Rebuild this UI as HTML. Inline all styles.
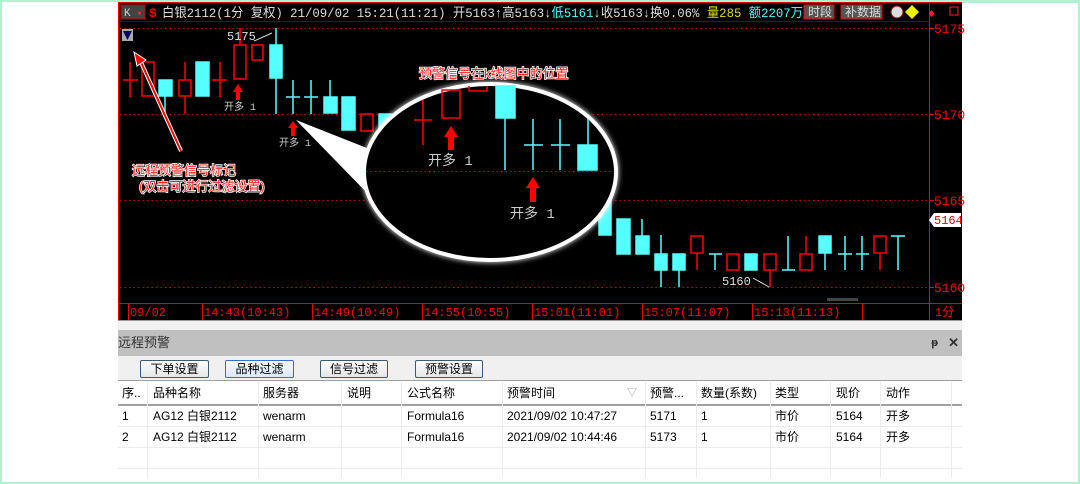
<!DOCTYPE html>
<html><head><meta charset="utf-8"><style>
*{margin:0;padding:0;box-sizing:border-box}
body{width:1080px;height:484px;background:#fff;position:relative;overflow:hidden;font-family:"Liberation Sans","Noto Sans CJK SC",sans-serif}
.frame{position:absolute;left:0;top:0;width:1080px;height:484px;border:2px solid #aef3d2;pointer-events:none}
.abs{position:absolute}
.panelhdr{left:118px;top:330px;width:844px;height:26px;background:#c0c0c0;font-size:13px;color:#333;line-height:26px}
.tool{left:118px;top:356px;width:844px;height:25px;background:#f0f0f0;border-bottom:1px solid #a0a0a0}
.btn{position:absolute;top:4px;height:18px;border:1px solid #3c5a78;border-radius:2px;background:linear-gradient(#fdfdfd,#e6e6e6);font-size:12px;text-align:center;line-height:16px;color:#000}
.tbl{left:118px;top:382px;width:844px;font-size:12px;color:#000}
.row{position:absolute;left:0;width:844px;height:21px;border-bottom:1px solid #ececec}
.row span{position:absolute;top:0;line-height:21px;white-space:nowrap}
.hdr{border-bottom:2px solid #a0a0a0;height:24px;background:#fff}
.hdr span{line-height:23px}
.vl{position:absolute;top:382px;width:1px;height:96px;background:#ececec}
</style></head><body>
<svg class="abs" style="left:0;top:0" width="1080" height="322" xmlns="http://www.w3.org/2000/svg" font-family="Liberation Mono, Noto Sans CJK SC, monospace">
<rect x="118" y="0" width="844" height="321" fill="#000"/>
<rect x="962" y="0" width="118" height="3" fill="#aef3d2"/>
<line x1="118.5" y1="0" x2="118.5" y2="320" stroke="#e00" />
<line x1="929.5" y1="0" x2="929.5" y2="320" stroke="#e00" />
<line x1="118" y1="2.5" x2="962" y2="2.5" stroke="#e00"/>
<line x1="118" y1="21.5" x2="929" y2="21.5" stroke="#600"/>
<g stroke="#b00" stroke-dasharray="1.5 3" stroke-width="1">
<line x1="120" y1="28.5" x2="929" y2="28.5"/><line x1="120" y1="114.5" x2="929" y2="114.5"/><line x1="120" y1="200.5" x2="929" y2="200.5"/><line x1="120" y1="287.5" x2="929" y2="287.5"/>
</g>
<g stroke="#e00"><line x1="929" y1="28.5" x2="934" y2="28.5"/><line x1="929" y1="114.5" x2="934" y2="114.5"/><line x1="929" y1="200.5" x2="934" y2="200.5"/><line x1="929" y1="287.5" x2="934" y2="287.5"/></g>
<g fill="#f00" font-size="13"><text x="934" y="33">5175</text><text x="934" y="119">5170</text><text x="934" y="205">5165</text><text x="934" y="292">5160</text></g>
<path d="M929 220 L934 213 H961 V227 H934 Z" fill="#fff"/><text x="934" y="224" fill="#e00" font-size="12">5164</text>
<rect x="121" y="5" width="24" height="14" fill="#444" stroke="#c00"/><text x="124" y="16" fill="#ccc" font-size="11">K</text><text x="137" y="16" fill="#f33" font-size="9">▾</text>
<text x="149" y="17" fill="#f00" font-size="13" font-weight="bold">$</text>
<text x="162" y="17" font-size="13" fill="#ddd" textLength="641" lengthAdjust="spacingAndGlyphs"><tspan>白银2112(1分 复权) 21/09/02 15:21(11:21) 开5163↑高5163↓</tspan><tspan fill="#4ff">低5161</tspan><tspan>↓收5163↓换0.06% </tspan><tspan fill="#dd0">量285</tspan><tspan fill="#4ff"> 额2207万</tspan></text>
<rect x="804" y="5" width="30" height="14" fill="#555" stroke="#e00"/><text x="808" y="16" fill="#ddd" font-size="12">时段</text>
<rect x="841" y="5" width="41" height="14" fill="#555" stroke="#e00"/><text x="845" y="16" fill="#ddd" font-size="12">补数据</text>
<circle cx="897" cy="12" r="6" fill="#ddd" stroke="#900"/><path d="M912 5 L919 12 L912 19 L905 12Z" fill="#ee0"/>
<text x="928" y="17" fill="#f22" font-size="12">♦</text><rect x="950" y="7" width="8" height="8" fill="none" stroke="#f22"/>
<rect x="122" y="29" width="11" height="12" fill="#aaa"/><path d="M123 31 L132 31 L127.5 40Z" fill="#006"/>
<g stroke="#f00" fill="none" stroke-width="1.5">
<path d="M123 80H138M130 62V97"/>
<rect x="142" y="62" width="12" height="34"/>
<rect x="179" y="80" width="12" height="16"/><path d="M185 62V80M185 96V113"/>
<path d="M212 80H227M220 62V97"/>
<rect x="234" y="45" width="12" height="34"/><path d="M240 28V45"/>
<rect x="252" y="45" width="11" height="15"/>
<rect x="361" y="114" width="12" height="17"/>
</g>
<path d="M254 41 L272 33" stroke="#ddd"/><text x="227" y="40" fill="#ddd" font-size="12">5175</text>
<g fill="#5ff" stroke="#5ff" stroke-width="1.5">
<rect x="159" y="80" width="13" height="16"/><path d="M165 96V113" fill="none"/>
<rect x="196" y="62" width="13" height="34"/>
<rect x="270" y="45" width="12" height="33"/><path d="M276 28V114" fill="none"/>
<path d="M286 97H300M293 80V114M304 97H318M311 80V114M330 80V97" fill="none"/>
<rect x="324" y="97" width="13" height="16"/>
<rect x="342" y="97" width="13" height="33"/>
<rect x="379" y="114" width="12" height="31"/>
</g>
<g fill="#f00"><path d="M238 84 L243 92 H240 V100 H236 V92 H233Z"/><path d="M293 121 L298 128 H295 V136 H291 V128 H288Z"/></g>
<g fill="#ccc" font-size="10"><text x="224" y="110">开多 1</text><text x="279" y="146">开多 1</text></g>
<g fill="#5ff" stroke="#5ff" stroke-width="1.5">
<rect x="599" y="200" width="12" height="35"/>
<rect x="617" y="219" width="13" height="35"/>
<rect x="636" y="236" width="13" height="18"/><path d="M642 219V236" fill="none"/>
<rect x="655" y="254" width="12" height="16"/><path d="M661 235V287" fill="none"/>
<rect x="673" y="254" width="12" height="16"/><path d="M679 270V287" fill="none"/>
<path d="M709 254H722M715 254V270" fill="none"/>
<rect x="745" y="254" width="12" height="16"/>
<path d="M782 270H795M788 236V270" fill="none"/>
<rect x="819" y="236" width="12" height="17"/><path d="M825 253V270" fill="none"/>
<path d="M838 254H852M845 236V270M856 254H869M862 236V270M891 236H905M898 236V270" fill="none"/>
</g>
<g stroke="#f00" fill="none" stroke-width="1.5">
<rect x="691" y="236" width="12" height="17"/><path d="M697 253V270"/>
<rect x="727" y="254" width="12" height="16"/>
<rect x="764" y="254" width="12" height="16"/><path d="M770 270V287"/>
<rect x="800" y="254" width="12" height="16"/><path d="M806 236V254"/>
<rect x="874" y="236" width="12" height="17"/><path d="M880 253V270"/>
</g>
<path d="M753 278 L769 287" stroke="#ddd"/><text x="722" y="285" fill="#ddd" font-size="12">5160</text>
<path d="M296 120 L372 150 L372 198 Z" fill="#fff"/>
<ellipse cx="490" cy="172" rx="126" ry="88" fill="#000" stroke="#fff" stroke-width="4" style="filter:drop-shadow(0 0 3px #fff)"/>
<line x1="366" y1="171.5" x2="614" y2="171.5" stroke="#b00" stroke-dasharray="1.5 3"/>
<g stroke="#f00" fill="none" stroke-width="1.5">
<path d="M414 120H432M423 100V145"/>
<rect x="442" y="90" width="18" height="28"/>
<path d="M469 86V91H487V86"/>
</g>
<g fill="#5ff" stroke="#5ff" stroke-width="1.5">
<rect x="496" y="86" width="19" height="32"/><path d="M505 118V170" fill="none"/>
<path d="M524 145H543M533 119V170M551 145H570M560 119V170M588 119V145" fill="none"/>
<rect x="578" y="145" width="19" height="25"/>
</g>
<g fill="#f00"><path d="M451 126 L458 137 H454 V150 H448 V137 H444Z"/><path d="M533 177 L540 188 H536 V202 H530 V188 H526Z"/></g>
<g fill="#ccc" font-size="14"><text x="428" y="165">开多 1</text><text x="510" y="218">开多 1</text></g>
<path d="M140 60 L181 151" stroke="#fff" stroke-width="4"/><path d="M140 60 L181 151" stroke="#f00" stroke-width="2"/>
<path d="M134 52 L146 60 L137 66Z" fill="#f00" stroke="#fff"/>
<g font-family="Liberation Sans, Noto Sans CJK SC, sans-serif" font-size="13" fill="#f22" stroke="#fff" stroke-width="1.5" paint-order="stroke">
<text x="419" y="78">预警信号在k线图中的位置</text>
<text x="132" y="175">远程预警信号标记</text>
<text x="139" y="191">(双击可进行过滤设置)</text>
</g>
<rect x="827" y="298" width="31" height="3" fill="#444"/>
<line x1="118" y1="303.5" x2="962" y2="303.5" stroke="#e00"/>
<g stroke="#e00"><path d="M128.5 303V320M202.5 303V320M312.5 303V320M422.5 303V320M532.5 303V320M642.5 303V320M752.5 303V320M862.5 303V320"/></g>
<g fill="#f00" font-size="12"><text x="130" y="316">09/02</text><text x="204" y="316">14:43(10:43)</text><text x="314" y="316">14:49(10:49)</text><text x="424" y="316">14:55(10:55)</text><text x="534" y="316">15:01(11:01)</text><text x="644" y="316">15:07(11:07)</text><text x="754" y="316">15:13(11:13)</text><text x="935" y="316">1分</text></g>
</svg>
<div class="abs" style="left:118px;top:320px;width:844px;height:10px;background:#f0f0f0;border-top:1px solid #999"></div>
<div class="abs panelhdr">远程预警<span style="position:absolute;right:24px;font-size:11px;font-weight:bold">ᵽ</span><span style="position:absolute;right:3px;font-weight:bold">✕</span></div>
<div class="abs tool">
<div class="btn" style="left:22px;width:69px">下单设置</div>
<div class="btn" style="left:107px;width:69px;border-color:#2f6fd6;background:linear-gradient(#f4f9ff,#dbe9fb)">品种过滤</div>
<div class="btn" style="left:202px;width:68px">信号过滤</div>
<div class="btn" style="left:297px;width:68px">预警设置</div>
</div>
<div class="abs tbl">
<div class="row hdr" style="top:0"><span style="left:4px">序..</span><span style="left:35px">品种名称</span><span style="left:145px">服务器</span><span style="left:229px">说明</span><span style="left:289px">公式名称</span><span style="left:389px">预警时间</span><span style="left:509px;color:#999;font-size:10px">▽</span><span style="left:532px">预警...</span><span style="left:583px">数量(系数)</span><span style="left:657px">类型</span><span style="left:718px">现价</span><span style="left:768px">动作</span></div>
<div class="row" style="top:24px"><span style="left:4px">1</span><span style="left:35px">AG12 白银2112</span><span style="left:145px">wenarm</span><span style="left:289px">Formula16</span><span style="left:389px">2021/09/02 10:47:27</span><span style="left:532px">5171</span><span style="left:583px">1</span><span style="left:657px">市价</span><span style="left:718px">5164</span><span style="left:768px">开多</span></div>
<div class="row" style="top:45px"><span style="left:4px">2</span><span style="left:35px">AG12 白银2112</span><span style="left:145px">wenarm</span><span style="left:289px">Formula16</span><span style="left:389px">2021/09/02 10:44:46</span><span style="left:532px">5173</span><span style="left:583px">1</span><span style="left:657px">市价</span><span style="left:718px">5164</span><span style="left:768px">开多</span></div>
<div class="row" style="top:66px"></div>
</div>
<div class="vl" style="left:147px"></div><div class="vl" style="left:258px"></div><div class="vl" style="left:341px"></div><div class="vl" style="left:401px"></div><div class="vl" style="left:502px"></div><div class="vl" style="left:645px"></div><div class="vl" style="left:696px"></div><div class="vl" style="left:770px"></div><div class="vl" style="left:830px"></div><div class="vl" style="left:880px"></div><div class="vl" style="left:951px"></div>
<div class="frame"></div>
</body></html>
